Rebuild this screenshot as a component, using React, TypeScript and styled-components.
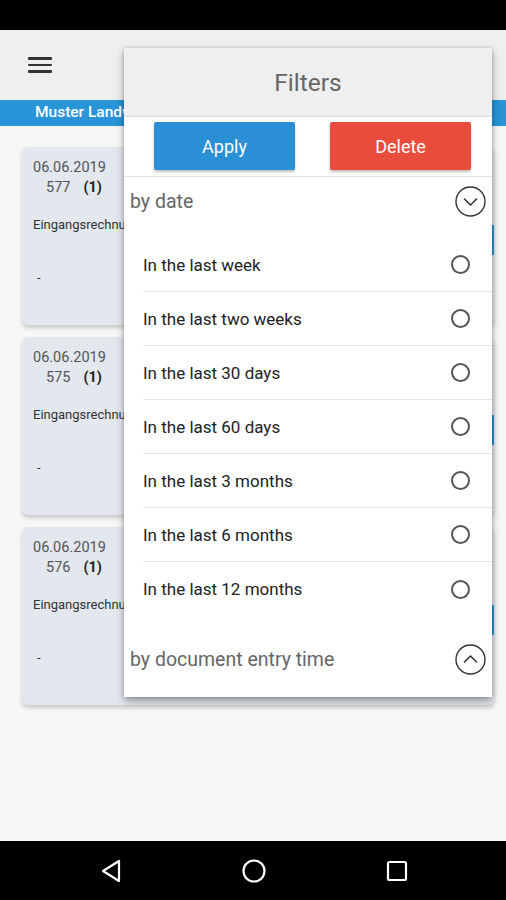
import { createGlobalStyle } from "styled-components";
import styled from "styled-components";

const GlobalStyle = createGlobalStyle`
  html, body {
    margin: 0;
    padding: 0;
    background: #000;
  }
  body {
    font-family: Roboto, "Noto Sans", "Liberation Sans", sans-serif;
  }
  * {
    box-sizing: border-box;
  }
`;

const Screen = styled.div`
  position: relative;
  width: 506px;
  height: 900px;
  display: flex;
  flex-direction: column;
  overflow: hidden;
  background: #f7f7f7;
`;

const StatusBar = styled.div`
  height: 30px;
  background: #000;
  flex-shrink: 0;
`;

const AppBar = styled.header`
  height: 70px;
  background: #efefef;
  display: flex;
  align-items: center;
  padding-left: 28px;
  flex-shrink: 0;
`;

const Burger = styled.div`
  width: 24px;
  display: grid;
  gap: 4px;

  span {
    display: block;
    height: 2.5px;
    background: #333;
    border-radius: 1px;
  }
`;

const SubBar = styled.div`
  height: 26px;
  background: #2a94d8;
  color: #fff;
  font-size: 15.5px;
  font-weight: 500;
  display: flex;
  align-items: center;
  padding: 0 0 2px 35px;
  flex-shrink: 0;
`;

const Content = styled.main`
  flex: 1;
  padding: 21px 12px 0 22px;
  display: flex;
  flex-direction: column;
  gap: 12px;
`;

const Card = styled.div`
  height: 178px;
  background: #e3e7ee;
  border-radius: 6px;
  box-shadow: 0 3px 4px rgba(0, 0, 0, 0.18);
  display: flex;
  justify-content: space-between;
  padding: 11px 0 0 11px;
`;

const CardInfo = styled.div`
  display: flex;
  flex-direction: column;
  color: #555;
  font-size: 14.5px;
`;

const DateLine = styled.div`
  line-height: 20px;
`;

const NumberLine = styled.div`
  line-height: 20px;
  padding-left: 13px;

  b {
    margin-left: 13px;
    color: #222;
  }
`;

const TypeLine = styled.div`
  margin-top: 19px;
  font-size: 13px;
  line-height: 16px;
  color: #333;
`;

const Dash = styled.div`
  margin-top: 37px;
  padding-left: 4px;
  font-size: 13px;
  color: #333;
`;

const CardAction = styled.div`
  width: 40px;
  height: 30px;
  margin-top: 67px;
  background: #2a94d8;
  border-radius: 3px 0 0 3px;
`;

const NavBar = styled.nav`
  height: 59px;
  background: #000;
  flex-shrink: 0;
  display: grid;
  grid-template-columns: repeat(3, 1fr);
  align-items: center;
  justify-items: center;
  padding: 0 38px 0 39px;
`;

const Overlay = styled.section`
  position: absolute;
  left: 124px;
  top: 48px;
  width: 368px;
  height: 649px;
  background: #fff;
  box-shadow: 0 4px 8px rgba(0, 0, 0, 0.35), 0 0 3px rgba(0, 0, 0, 0.15);
  display: flex;
  flex-direction: column;
`;

const PanelHeader = styled.div`
  height: 69px;
  background: #efefef;
  border-bottom: 1px solid #dcdcdc;
  display: flex;
  align-items: center;
  justify-content: center;
  font-size: 24.5px;
  color: #666;
`;

const Actions = styled.div`
  display: flex;
  justify-content: space-between;
  padding: 5px 21px 6px 30px;
  border-bottom: 1px solid #e2e2e2;
`;

const ActionButton = styled.button<{ $tone: "blue" | "red" }>`
  width: 141px;
  height: 48px;
  border: none;
  border-radius: 2px;
  background: ${({ $tone }) => ($tone === "blue" ? "#2a8fd4" : "#e74c3c")};
  color: #fff;
  font-family: inherit;
  font-size: 18px;
  box-shadow: 0 2px 3px rgba(0, 0, 0, 0.25);
`;

const SectionRow = styled.div<{ $gap?: number }>`
  height: 48px;
  margin-top: ${({ $gap }) => $gap ?? 0}px;
  display: flex;
  align-items: center;
  justify-content: space-between;
  padding: 0 6px;
  font-size: 19.5px;
  color: #666;
`;

const OptionList = styled.ul`
  list-style: none;
  margin: 13px 0 0 19px;
  padding: 0;
`;

const Option = styled.li`
  height: 54px;
  display: flex;
  align-items: center;
  justify-content: space-between;
  padding-right: 22px;
  font-size: 17px;
  color: #222;
  border-bottom: 1px solid #e6e6e6;

  &:last-child {
    border-bottom: none;
  }
`;

const Radio = styled.span`
  width: 19px;
  height: 19px;
  border-radius: 50%;
  border: 2px solid #555;
`;

const options = [
  "In the last week",
  "In the last two weeks",
  "In the last 30 days",
  "In the last 60 days",
  "In the last 3 months",
  "In the last 6 months",
  "In the last 12 months",
];

const cards = [
  { date: "06.06.2019", no: "577" },
  { date: "06.06.2019", no: "575" },
  { date: "06.06.2019", no: "576" },
];

function Chevron({ up }: { up?: boolean }) {
  return (
    <svg width="31" height="31" viewBox="0 0 31 31">
      <circle cx="15.5" cy="15.5" r="14.5" fill="none" stroke="#333" strokeWidth="1.4" />
      <path
        d={up ? "M9.5 18 L15.5 12 L21.5 18" : "M9.5 13 L15.5 19 L21.5 13"}
        fill="none"
        stroke="#333"
        strokeWidth="1.6"
        strokeLinecap="round"
        strokeLinejoin="round"
      />
    </svg>
  );
}

export default function App() {
  return (
    <>
      <GlobalStyle />
      <Screen>
        <StatusBar />
        <AppBar>
          <Burger>
            <span />
            <span />
            <span />
          </Burger>
        </AppBar>
        <SubBar>Muster Landwirtschaft</SubBar>
        <Content>
          {cards.map((c) => (
            <Card key={c.no}>
              <CardInfo>
                <DateLine>{c.date}</DateLine>
                <NumberLine>
                  {c.no}
                  <b>(1)</b>
                </NumberLine>
                <TypeLine>Eingangsrechnung</TypeLine>
                <Dash>-</Dash>
              </CardInfo>
              <CardAction />
            </Card>
          ))}
        </Content>
        <NavBar>
          <svg width="24" height="26" viewBox="0 0 24 26">
            <path d="M20 3 L20 23 L4 13 Z" fill="none" stroke="#fff" strokeWidth="2.2" strokeLinejoin="round" />
          </svg>
          <svg width="26" height="26" viewBox="0 0 26 26">
            <circle cx="13" cy="13" r="10.5" fill="none" stroke="#fff" strokeWidth="2.2" />
          </svg>
          <svg width="24" height="24" viewBox="0 0 24 24">
            <rect x="3" y="3" width="18" height="18" rx="1.5" fill="none" stroke="#fff" strokeWidth="2.2" />
          </svg>
        </NavBar>

        <Overlay>
          <PanelHeader>Filters</PanelHeader>
          <Actions>
            <ActionButton $tone="blue">Apply</ActionButton>
            <ActionButton $tone="red">Delete</ActionButton>
          </Actions>
          <SectionRow>
            by date
            <Chevron />
          </SectionRow>
          <OptionList>
            {options.map((o) => (
              <Option key={o}>
                {o}
                <Radio />
              </Option>
            ))}
          </OptionList>
          <SectionRow $gap={19}>
            by document entry time
            <Chevron up />
          </SectionRow>
        </Overlay>
      </Screen>
    </>
  );
}
